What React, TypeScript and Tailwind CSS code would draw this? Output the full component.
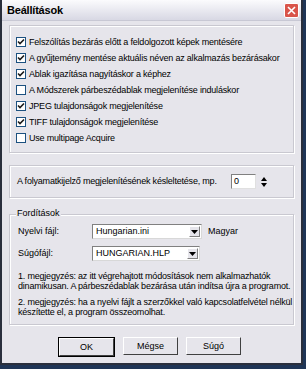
import React from "react";

const font = { fontFamily: '"Liberation Sans", Arial, sans-serif' };

function Check({ checked, label }: { checked: boolean; label: string }) {
  return (
    <div className="flex items-center h-[16px]">
      <div className="w-[10px] h-[10px] border border-[#1c5180] bg-white flex items-center justify-center shrink-0">
        {checked && (
          <svg width="8" height="8" viewBox="0 0 8 8">
            <path d="M1 3.5 L3 5.5 L7 1.5" stroke="#1a1a1a" strokeWidth="1.6" fill="none" />
          </svg>
        )}
      </div>
      <span className="ml-[3px] text-[9px] leading-none text-black whitespace-nowrap tracking-[-0.2px]">{label}</span>
    </div>
  );
}

function Arrow() {
  return (
    <svg width="7" height="4" viewBox="0 0 7 4">
      <path d="M0 0 L7 0 L3.5 4 Z" fill="#000" />
    </svg>
  );
}

function Select({ value, w }: { value: string; w: string }) {
  return (
    <div className={`${w} h-[15px] bg-white border border-[#808080] border-r-[#d8d8d8] border-b-[#d8d8d8] flex items-center`}>
      <span className="flex-1 pl-[3px] text-[9px] leading-none whitespace-nowrap">{value}</span>
      <div className="w-[11px] h-[11px] mr-[1px] bg-[#e6e5eb] border border-[#fff] border-r-[#808080] border-b-[#808080] flex items-center justify-center">
        <Arrow />
      </div>
    </div>
  );
}

function Btn({ label }: { label: string }) {
  return (
    <div className="w-[55px] h-[18px] border border-[#fff] border-r-[#404040] border-b-[#404040] bg-[#e6e5eb] flex items-center justify-center text-[9px] leading-none">
      {label}
    </div>
  );
}

const box = "border border-[#c9c8d0] shadow-[inset_1px_1px_0_#fff,1px_1px_0_#fff]";

export default function App() {
  return (
    <div className="w-[306px] h-[369px] bg-[#1f3556] overflow-hidden" style={font}>
      <div className="w-[303px] h-[365px] bg-[#e6e5eb] border-l-[2px] border-[#2a2f3c] border-b-[2px] border-r-[2px] flex flex-col">
        {/* title bar */}
        <div className="h-[21px] shrink-0 bg-gradient-to-b from-[#fbfbfd] to-[#d8d8e4] flex items-center pl-[5px] pr-[2px] border-b border-[#c8c8d4]">
          <span className="font-bold text-[11px] text-black flex-1 tracking-[-0.2px]">Beállítások</span>
          <div className="w-[15px] h-[15px] rounded-[2px] bg-[#d9544a] border border-white flex items-center justify-center">
            <svg width="9" height="9" viewBox="0 0 9 9">
              <path d="M1 1 L8 8 M8 1 L1 8" stroke="#fff" strokeWidth="1.6" />
            </svg>
          </div>
        </div>
        {/* body */}
        <div className="flex flex-col px-[7px] pt-[4px]">
          <div className={`${box} h-[128px] pl-[6px] pt-[8px]`}>
            <Check checked label="Felszólítás bezárás előtt a feldolgozott képek mentésére" />
            <Check checked label="A gyűjtemény mentése aktuális néven az alkalmazás bezárásakor" />
            <Check checked label="Ablak igazítása nagyításkor a képhez" />
            <Check checked={false} label="A Módszerek párbeszédablak megjelenítése induláskor" />
            <Check checked label="JPEG tulajdonságok megjelenítése" />
            <Check checked label="TIFF tulajdonságok megjelenítése" />
            <Check checked={false} label="Use multipage Acquire" />
          </div>
          <div className={`${box} mt-[12px] h-[33px] pl-[7px] flex items-center`}>
            <span className="text-[9px] leading-none flex-1 whitespace-nowrap tracking-[-0.2px]">A folyamatkijelző megjelenítésének késleltetése, mp.</span>
            <div className="w-[25px] h-[15px] bg-white border border-[#808080] border-r-[#e0e0e0] border-b-[#e0e0e0] text-[9px] leading-none pl-[2px] flex items-center">0</div>
            <div className="ml-[5px] mr-[26px] flex flex-col items-center gap-[2px]">
              <svg width="6" height="4" viewBox="0 0 6 4"><path d="M0 4 L6 4 L3 0 Z" fill="#000" /></svg>
              <svg width="6" height="4" viewBox="0 0 6 4"><path d="M0 0 L6 0 L3 4 Z" fill="#000" /></svg>
            </div>
          </div>
          <div className={`${box} relative mt-[16px] h-[111px] pl-[8px] pt-[9px]`}>
            <span className="absolute left-[6px] top-[-6px] bg-[#e6e5eb] px-[1px] text-[9px] leading-none">Fordítások</span>
            <div className="flex items-center">
              <span className="w-[74px] text-[9px] leading-none">Nyelvi fájl:</span>
              <Select value="Hungarian.ini" w="w-[110px]" />
              <span className="ml-[6px] text-[9px] leading-none">Magyar</span>
            </div>
            <div className="flex items-center mt-[7px]">
              <span className="w-[74px] text-[9px] leading-none">Súgófájl:</span>
              <Select value="HUNGARIAN.HLP" w="w-[108px]" />
            </div>
            <div className="mt-[10px] text-[9px] leading-[10px] tracking-[-0.2px] whitespace-nowrap">
              1. megjegyzés: az itt végrehajtott módosítások nem alkalmazhatók<br />
              dinamikusan. A párbeszédablak bezárása után indítsa újra a programot.
            </div>
            <div className="mt-[6px] text-[9px] leading-[10px] tracking-[-0.2px] whitespace-nowrap">
              2. megjegyzés: ha a nyelvi fájlt a szerzőkkel való kapcsolatfelvétel nélkül<br />
              készítette el, a program összeomolhat.
            </div>
          </div>
          <div className="flex justify-center gap-[8px] mt-[12px] pr-[4px]">
            <div className="border border-black"><Btn label="OK" /></div>
            <Btn label="Mégse" />
            <Btn label="Súgó" />
          </div>
        </div>
      </div>
    </div>
  );
}
